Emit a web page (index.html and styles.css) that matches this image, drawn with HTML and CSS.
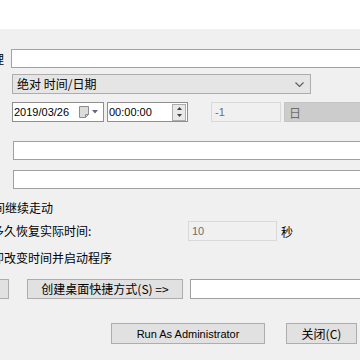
FILE: index.html
```html
<!DOCTYPE html>
<html lang="zh-CN">
<head>
  <meta charset="UTF-8">
  <title>RunAsDate</title>
  <link rel="stylesheet" href="styles.css">
</head>
<body>
  <div class="titlebar"></div>

  <div class="window">
    <div class="row r-app">
      <label class="lbl">程序路径处理</label>
      <input class="edit focus grow" type="text">
    </div>

    <div class="row r-mode">
      <div class="combo mode">
        <span>绝对 时间/日期</span>
        <svg class="chev" width="9" height="5" viewBox="0 0 9 5"><path d="M0.5 0.5 L4.5 4.5 L8.5 0.5" fill="none" stroke="#606060" stroke-width="1.2"/></svg>
      </div>
    </div>

    <div class="row r-date">
      <div class="picker date">
        <span class="val">2019/03/26</span>
        <svg class="cal" width="10" height="12" viewBox="0 0 10 12"><path d="M0.5 0.5 H9.5 V8.5 L6.5 11.5 H0.5 Z" fill="#dcdcdc" stroke="#8c8c8c"/><path d="M6.5 11.5 V8.5 H9.5" fill="none" stroke="#8c8c8c"/></svg>
        <svg class="tri" width="6" height="4" viewBox="0 0 6 4"><path d="M0 0 H6 L3 3.5 Z" fill="#5d6d84"/></svg>
      </div>
      <div class="picker time">
        <span class="val">00:00:00</span>
        <div class="spin">
          <svg width="5" height="3" viewBox="0 0 5 3"><path d="M0 3 H5 L2.5 0 Z" fill="#404040"/></svg>
          <svg width="5" height="3" viewBox="0 0 5 3"><path d="M0 0 H5 L2.5 3 Z" fill="#404040"/></svg>
        </div>
      </div>
      <div class="edit off offset">-1</div>
      <div class="combo off unit">日</div>
    </div>

    <div class="row r-box1"><input class="edit plain grow" type="text"></div>
    <div class="row r-box2"><input class="edit plain grow" type="text"></div>

    <label class="check c-move"><input type="checkbox"><span>让时间继续走动</span></label>

    <div class="row r-back">
      <label class="check c-back"><input type="checkbox"><span>在多久恢复实际时间:</span></label>
      <div class="edit off secs">10</div>
      <span class="unit-txt">秒</span>
    </div>

    <label class="check c-now"><input type="checkbox"><span>立即改变时间并启动程序</span></label>

    <div class="row r-short">
      <button class="btn b-prev">浏览...</button>
      <button class="btn b-short">创建桌面快捷方式(S) =&gt;</button>
      <input class="edit plain grow" type="text">
    </div>

    <div class="row r-foot">
      <button class="btn b-admin">Run As Administrator</button>
      <button class="btn b-close">关闭(C)</button>
    </div>
  </div>
</body>
</html>
```

FILE: styles.css
```css
html, body {
  margin: 0;
  width: 360px;
  height: 360px;
  overflow: hidden;
}

body {
  background: #f0f0f0;
  color: #000;
  font-family: "Noto Sans CJK SC", "Liberation Sans", sans-serif;
  font-size: 12px;
}

.titlebar {
  height: 29px;
  background: #fff;
}

.window {
  padding-top: 20px;
  width: 700px;
}

.row {
  display: flex;
  align-items: center;
}

.grow {
  width: 500px;
  flex: none;
}

/* text boxes */
.edit {
  box-sizing: border-box;
  height: 19px;
  margin: 0;
  padding: 0 3px;
  background: #fff;
  border: 1px solid #a0a0a0;
  font: 12px "Liberation Sans", sans-serif;
  outline: none;
}

.edit.focus {
  border-color: #8aa7c4;
}

.edit.off {
  display: flex;
  align-items: center;
  height: 20px;
  background: #f0f0f0;
  border: 1px solid #d9d9d9;
  color: #6d6d6d;
  font-size: 11px;
}

.r-app {
  height: 19px;
}

.lbl {
  width: 100px;
  margin-left: -96px;
  text-align: right;
  line-height: 16px;
}

.r-app .edit {
  margin-left: 7px;
}

/* combo boxes */
.combo {
  box-sizing: border-box;
  height: 20px;
  display: flex;
  align-items: center;
  border: 1px solid #adadad;
  background: #e5e5e5;
}

.r-mode {
  margin-top: 6px;
  padding-left: 12px;
}

.combo.mode {
  width: 299px;
  padding: 0 4px 0 4px;
  justify-content: space-between;
}

.combo.mode span {
  line-height: 16px;
}

.chev {
  margin-right: 2px;
}

/* date row */
.r-date {
  margin-top: 8px;
  padding-left: 12px;
  height: 20px;
}

.picker {
  box-sizing: border-box;
  height: 20px;
  display: flex;
  align-items: center;
  background: #fff;
  border: 1px solid #8f8f8f;
  font: 11px "Liberation Sans", sans-serif;
}

.picker .val {
  padding-left: 1px;
}

.picker.date {
  width: 92px;
}

.picker.date .val {
  width: 65px;
}

.cal {
  margin-right: 3px;
}

.picker.time {
  width: 81px;
  margin-left: 3px;
  justify-content: space-between;
}

.spin {
  box-sizing: border-box;
  width: 14px;
  height: 17px;
  margin-right: 1px;
  display: flex;
  flex-direction: column;
  align-items: center;
  justify-content: space-around;
  background: #e9e9e9;
  border: 1px solid #acacac;
}

.offset {
  width: 70px;
  margin-left: 23px;
  border-color: #e0e0e0;
}

.combo.unit {
  width: 120px;
  margin-left: 3px;
  padding-left: 4px;
  background: #cccccc;
  border-color: #c4c4c4;
  color: #6d6d6d;
}

/* empty boxes */
.r-box1 {
  margin-top: 19px;
  padding-left: 13px;
}

.r-box2 {
  margin-top: 10px;
  padding-left: 13px;
}

/* check rows */
.check {
  display: flex;
  align-items: center;
  gap: 4px;
  height: 16px;
  line-height: 16px;
  white-space: nowrap;
}

.check input {
  width: 13px;
  height: 13px;
  margin: 0;
}

.c-move {
  margin-top: 11px;
  margin-left: -48px;
}

.r-back {
  margin-top: 5px;
  height: 20px;
}

.c-back {
  width: 225px;
  margin-left: -37px;
}

.secs {
  width: 89px;
}

.unit-txt {
  margin-left: 4px;
}

.c-now {
  margin-top: 9px;
  margin-left: -37px;
}

/* buttons */
.btn {
  box-sizing: border-box;
  height: 20px;
  margin: 0;
  padding: 0;
  background: #e1e1e1;
  border: 1px solid #adadad;
  font: 12px "Noto Sans CJK SC", "Liberation Sans", sans-serif;
  color: #000;
  line-height: 16px;
}

.r-short {
  margin-top: 13px;
}

.b-prev {
  width: 70px;
  margin-left: -61px;
}

.b-short {
  width: 156px;
  margin-left: 18px;
}

.r-short .edit {
  height: 20px;
  margin-left: 7px;
}

.r-foot {
  margin-top: 24px;
  padding-left: 111px;
}

.b-admin {
  width: 154px;
  height: 21px;
  font: 11px "Liberation Sans", sans-serif;
}

.b-close {
  width: 71px;
  height: 21px;
  margin-left: 21px;
}
```
